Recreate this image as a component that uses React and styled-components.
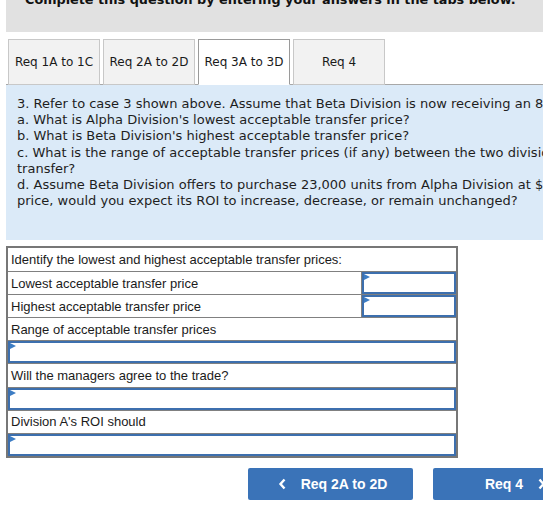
import React from 'react';
import styled, { createGlobalStyle } from 'styled-components';

const Global = createGlobalStyle`
  html, body {
    margin: 0;
    padding: 0;
    background: #ffffff;
    overflow: hidden;
  }
`;

const Page = styled.div`
  width: 543px;
  height: 510px;
  overflow: hidden;
  padding-left: 6px;
  box-sizing: border-box;
  font-family: "DejaVu Sans", Verdana, sans-serif;
  color: #222;
`;

const Banner = styled.div`
  height: 32px;
  background: #e1e1e1;
  overflow: hidden;
  width: 700px;
`;

const BannerText = styled.div`
  margin-top: -8px;
  padding-left: 19px;
  font-weight: bold;
  font-size: 12.8px;
  line-height: 16px;
  white-space: nowrap;
  color: #111;
`;

const TabStrip = styled.div`
  display: flex;
  gap: 3px;
  margin-top: 7px;
  padding-left: 2px;
  border-bottom: 1px solid #a8a8a8;
  width: 700px;
`;

const Tab = styled.div`
  width: 92px;
  height: 46px;
  box-sizing: border-box;
  display: flex;
  align-items: center;
  justify-content: center;
  font-size: 12px;
  white-space: nowrap;
  color: #1a1a1a;
  background: ${p => (p.$active ? '#ffffff' : '#f2f2f2')};
  border: 1px solid ${p => (p.$active ? '#9a9a9a' : '#c8c8c8')};
  border-bottom: ${p => (p.$active ? '1px solid #ffffff' : '1px solid #c8c8c8')};
  margin-bottom: -1px;
`;

const Panel = styled.div`
  background: #dbeaf8;
  height: 155px;
  box-sizing: border-box;
  padding: 11px 0 0 11px;
  width: 700px;
  font-size: 13px;
  line-height: 16.2px;
  color: #1e1e1e;
`;

const Line = styled.div`
  white-space: nowrap;
`;

const Table = styled.div`
  margin-top: 6px;
  width: 452px;
  box-sizing: border-box;
  border: 2px solid #777777;
  font-family: "Liberation Sans", Arial, sans-serif;
  font-size: 13px;
  color: #1b1b1b;
`;

const Row = styled.div`
  display: flex;
  height: 23.1px;
  box-sizing: border-box;
  border-top: ${p => (p.$first ? 'none' : '1px solid #808080')};
`;

const Label = styled.div`
  flex: 1;
  display: flex;
  align-items: center;
  padding-left: 3px;
  white-space: nowrap;
`;

const InputCell = styled.div`
  position: relative;
  box-sizing: border-box;
  width: ${p => (p.$narrow ? '94px' : '100%')};
  border: 2px solid #3d6fae;
  background: #ffffff;
  ${p => (p.$narrow ? 'box-shadow: -1px 0 0 #808080;' : '')}
  &::before {
    content: '';
    position: absolute;
    left: 0;
    top: 0;
    border-left: 6px solid #3d7dc4;
    border-top: 3px solid transparent;
    border-bottom: 3px solid transparent;
  }
`;

const Buttons = styled.div`
  display: flex;
  gap: 20px;
  margin-top: 10px;
  margin-left: 242px;
`;

const NavButton = styled.div`
  display: flex;
  align-items: center;
  justify-content: center;
  gap: 14px;
  width: 165px;
  flex-shrink: 0;
  height: 32px;
  padding-left: ${p => (p.$next ? '0' : '4px')};
  box-sizing: border-box;
  border-radius: 2px;
  background: #3a73b8;
  color: #ffffff;
  font-family: "Liberation Sans", Arial, sans-serif;
  font-weight: bold;
  font-size: 14px;
`;

const Chevron = styled.svg`
  width: 9px;
  height: 12px;
  flex-shrink: 0;
`;

const ChevronLeft = () => (
  <Chevron viewBox="0 0 9 12">
    <path d="M6.5 1.5 L2.5 6 L6.5 10.5" stroke="#fff" strokeWidth="2.4" fill="none" />
  </Chevron>
);

const ChevronRight = () => (
  <Chevron viewBox="0 0 9 12">
    <path d="M2.5 1.5 L6.5 6 L2.5 10.5" stroke="#fff" strokeWidth="2.4" fill="none" />
  </Chevron>
);

const tabs = ['Req 1A to 1C', 'Req 2A to 2D', 'Req 3A to 3D', 'Req 4'];

const lines = [
  '3. Refer to case 3 shown above. Assume that Beta Division is now receiving an 8% price discount from the outside supplier.',
  "a. What is Alpha Division's lowest acceptable transfer price?",
  "b. What is Beta Division's highest acceptable transfer price?",
  'c. What is the range of acceptable transfer prices (if any) between the two divisions? Will the managers agree to a',
  'transfer?',
  'd. Assume Beta Division offers to purchase 23,000 units from Alpha Division at $',
  'price, would you expect its ROI to increase, decrease, or remain unchanged?',
];

export default function App() {
  return (
    <Page>
      <Global />
      <Banner>
        <BannerText>Complete this question by entering your answers in the tabs below.</BannerText>
      </Banner>
      <TabStrip>
        {tabs.map((t, i) => (
          <Tab key={t} $active={i === 2}>{t}</Tab>
        ))}
      </TabStrip>
      <Panel>
        {lines.map((l, i) => (
          <Line key={i}>{l}</Line>
        ))}
      </Panel>
      <Table>
        <Row $first><Label>Identify the lowest and highest acceptable transfer prices:</Label></Row>
        <Row>
          <Label>Lowest acceptable transfer price</Label>
          <InputCell $narrow />
        </Row>
        <Row>
          <Label>Highest acceptable transfer price</Label>
          <InputCell $narrow />
        </Row>
        <Row><Label>Range of acceptable transfer prices</Label></Row>
        <Row><InputCell /></Row>
        <Row><Label>Will the managers agree to the trade?</Label></Row>
        <Row><InputCell /></Row>
        <Row><Label>Division A's ROI should</Label></Row>
        <Row><InputCell /></Row>
      </Table>
      <Buttons>
        <NavButton>
          <ChevronLeft />
          <span>Req 2A to 2D</span>
        </NavButton>
        <NavButton $next>
          <span>Req 4</span>
          <ChevronRight />
        </NavButton>
      </Buttons>
    </Page>
  );
}
